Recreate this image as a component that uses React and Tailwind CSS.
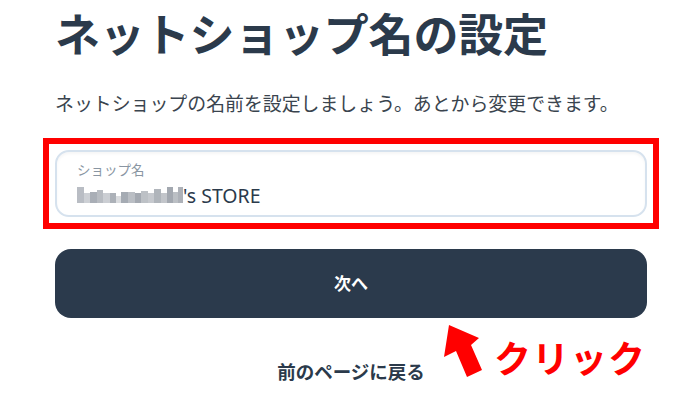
import React from 'react'

const jp = { fontFamily: '"Noto Sans", "Noto Sans CJK JP", sans-serif' }

// pixelated (blurred) part of the shop name
const mosaic = [
  { w: 7, h: 16, c: '#b9bdc4' },
  { w: 6, h: 10, c: '#cdd0d5' },
  { w: 7, h: 11, c: '#a9aeb6' },
  { w: 6, h: 13, c: '#b8bcc2' },
  { w: 7, h: 10, c: '#cbced3' },
  { w: 6, h: 10, c: '#acb1b8' },
  { w: 5, h: 7, c: '#dadcdf' },
  { w: 7, h: 11, c: '#a5abb3' },
  { w: 7, h: 11, c: '#babec4' },
  { w: 6, h: 10, c: '#a4a9b1' },
  { w: 7, h: 12, c: '#bdc1c6' },
  { w: 6, h: 10, c: '#c6c9ce' },
  { w: 7, h: 14, c: '#b0b5bb' },
  { w: 6, h: 10, c: '#c2c5ca' },
  { w: 6, h: 16, c: '#a3a8b0' },
  { w: 5, h: 11, c: '#bbbfc4' },
  { w: 5, h: 16, c: '#adb1b8' },
]

export default function App() {
  return (
    <div className="relative w-[700px] h-[402px] overflow-hidden bg-white" style={jp}>
      <div className="w-[592px] ml-[55px] flex flex-col">

        {/* Heading */}
        <h1 className="text-[45px] leading-[54px] font-bold text-[#2b3a4b] pt-[8px] tracking-[-0.2px]">
          ネットショップ名の設定
        </h1>
        <p className="mt-[29px] text-[18.9px] leading-[26px] text-[#3a444e]">
          ネットショップの名前を設定しましょう。あとから変更できます。
        </p>

        {/* Highlighted input */}
        <div className="mt-[21px] -mx-[12px] border-[6.5px] border-[#ff0000] px-[6px] py-[6px]">
          <div className="h-[67px] rounded-[14px] border-2 border-[#d6e2ee] bg-white shadow-[inset_0_2px_3px_rgba(0,0,0,0.04)] pl-[20px] pt-[3px] flex flex-col justify-center">
            <div className="text-[13.5px] leading-[18px] text-[#8995a2]">ショップ名</div>
            <div className="mt-[3px] flex items-center h-[28px] text-[19.5px] text-[#2b3a4b]">
              <span className="flex items-end h-[16px] mt-[-2px]">
                {mosaic.map((m, i) => (
                  <span key={i} style={{ width: m.w, height: m.h, background: m.c }} />
                ))}
              </span>
              <span>'s STORE</span>
            </div>
          </div>
        </div>

        {/* Next button */}
        <button className="mt-[20px] h-[69px] rounded-[16px] bg-[#2b3a4c] text-white text-[17px] font-bold">
          次へ
        </button>

        <div className="mt-[42px] text-center text-[18.5px] leading-[24px] font-bold text-[#2b3a4b]">
          前のページに戻る
        </div>
      </div>

      {/* Annotation */}
      <svg className="absolute left-0 top-0" width="700" height="402" viewBox="0 0 700 402">
        <polygon points="449,325 479,338 471,345 482,370 467,377 456,351 444,357" fill="#ff0000" />
      </svg>
      <div className="absolute left-[494px] top-[333px] text-[37px] leading-[52px] font-bold text-[#ff0000] tracking-[1px]">
        クリック
      </div>
    </div>
  )
}
